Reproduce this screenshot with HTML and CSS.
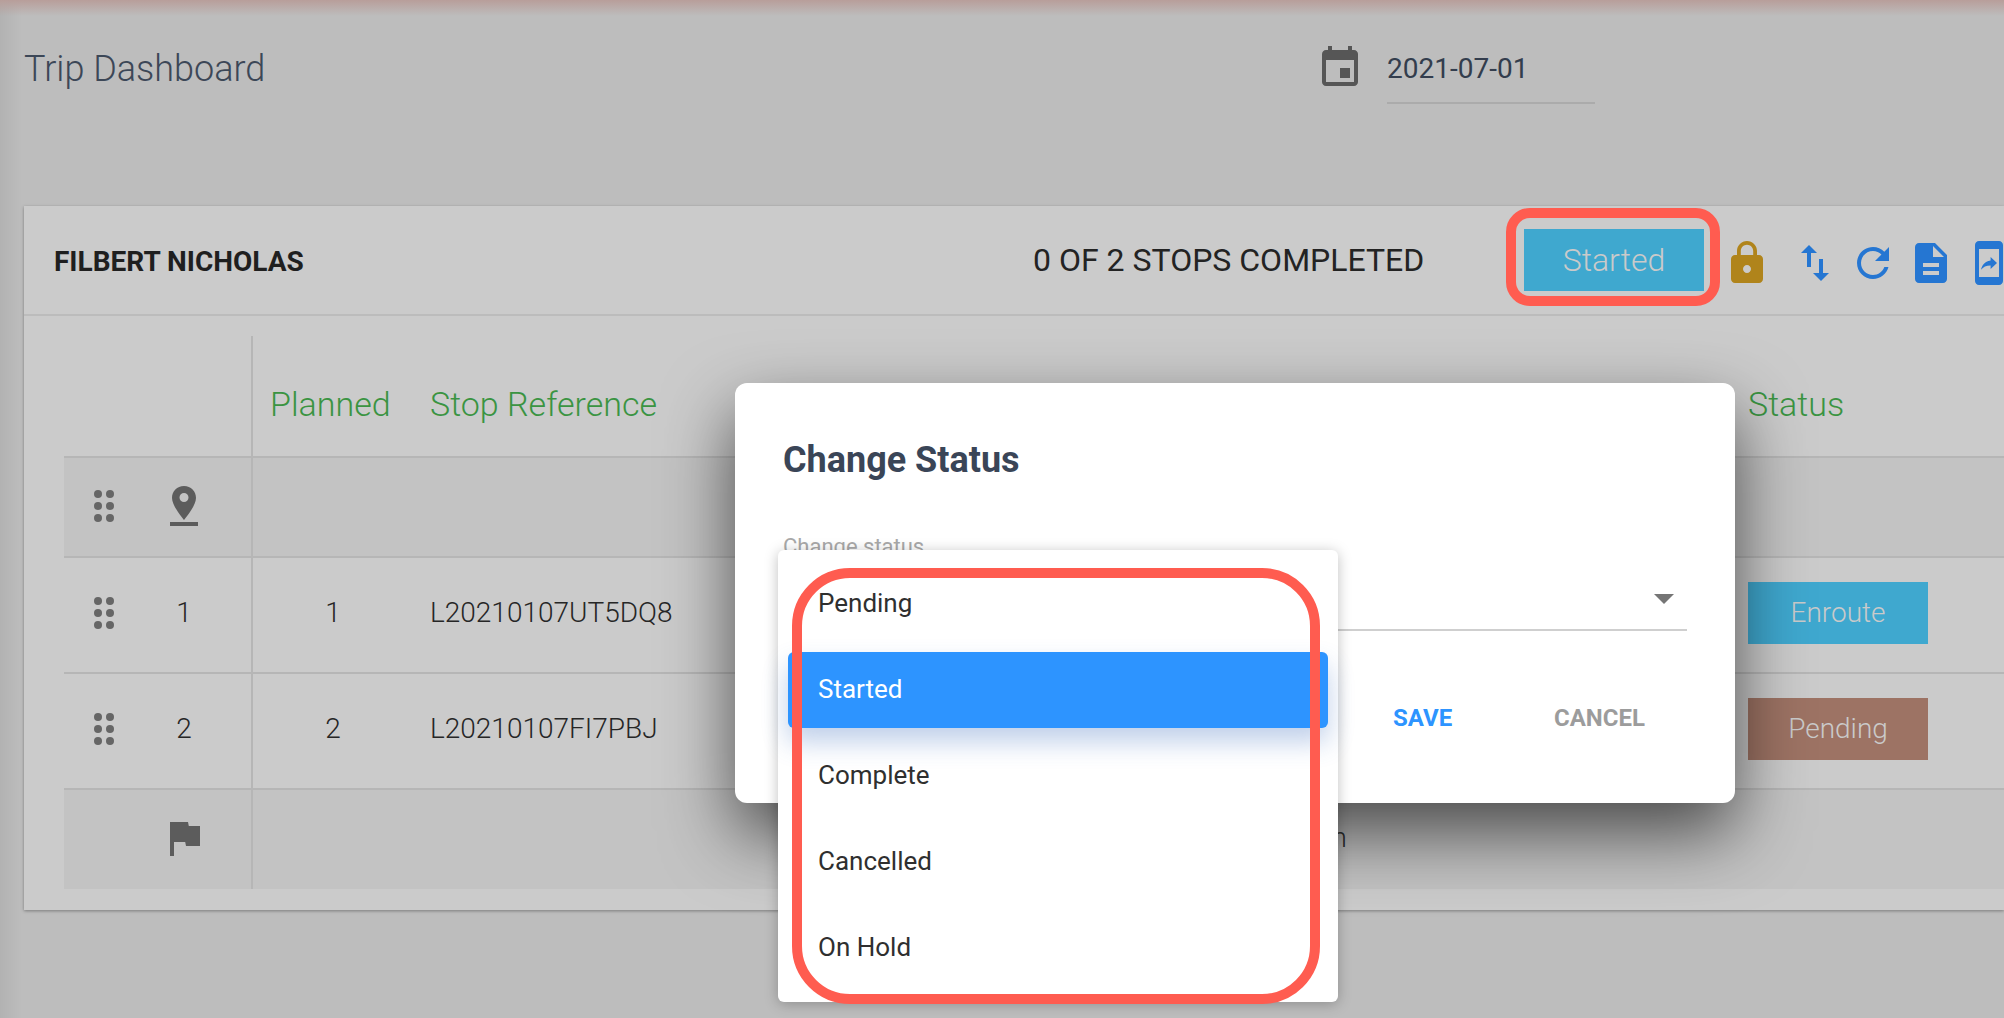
FILE: index.html
```html
<!DOCTYPE html>
<html lang="en">
<head>
<meta charset="utf-8">
<title>Trip Dashboard</title>
<link rel="stylesheet" href="styles.css">
</head>
<body>
<header class="page-head">
  <h1 class="page-title">Trip Dashboard</h1>
  <svg class="ico cal" viewBox="0 0 24 24"><path d="M17 12h-5v5h5v-5zM16 1v2H8V1H6v2H5c-1.11 0-1.99.9-1.99 2L3 19c0 1.1.89 2 2 2h14c1.1 0 2-.9 2-2V5c0-1.1-.9-2-2-2h-1V1h-2zm3 18H5V8h14v11z"/></svg>
  <div class="date-field">2021-07-01</div>
</header>

<section class="card">
  <div class="card-head">
    <div class="driver">FILBERT NICHOLAS</div>
    <div class="stops">0 OF 2 STOPS COMPLETED</div>
    <div class="status-wrap">
      <div class="badge badge-main">Started</div>
      <div class="mark mark-btn"></div>
    </div>
    <div class="tools">
      <svg class="ico lock" viewBox="0 0 24 24"><path d="M18 8h-1V6c0-2.76-2.24-5-5-5S7 3.24 7 6v2H6c-1.1 0-2 .9-2 2v10c0 1.1.9 2 2 2h12c1.1 0 2-.9 2-2V10c0-1.1-.9-2-2-2zm-6 9c-1.1 0-2-.9-2-2s.9-2 2-2 2 .9 2 2-.9 2-2 2zm3.1-9H8.9V6c0-1.71 1.39-3.1 3.1-3.1 1.71 0 3.1 1.39 3.1 3.1v2z"/></svg>
      <svg class="ico tool swap" viewBox="0 0 24 24"><path d="M16 17.01V10h-2v7.01h-3L15 21l4-3.99h-3zM9 3L5 6.99h3V14h2V6.99h3L9 3z"/></svg>
      <svg class="ico tool" viewBox="0 0 24 24"><path d="M17.65 6.35C16.2 4.9 14.21 4 12 4c-4.42 0-7.99 3.58-7.99 8s3.57 8 7.99 8c3.73 0 6.84-2.55 7.73-6h-2.08c-.82 2.33-3.04 4-5.65 4-3.31 0-6-2.69-6-6s2.69-6 6-6c1.66 0 3.14.69 4.22 1.78L13 11h7V4l-2.35 2.35z"/></svg>
      <svg class="ico tool" viewBox="0 0 24 24"><path d="M14 2H6c-1.1 0-1.99.9-1.99 2L4 20c0 1.1.89 2 1.99 2H18c1.1 0 2-.9 2-2V8l-6-6zm2 16H8v-2h8v2zm0-4H8v-2h8v2zm-3-5V3.5L18.5 9H13z"/></svg>
      <svg class="ico tool" viewBox="0 0 24 24"><path d="M17 1.01L7 1c-1.1 0-2 .9-2 2v18c0 1.1.9 2 2 2h10c1.1 0 2-.9 2-2V3c0-1.1-.9-1.99-2-1.99zM17 19H7V5h10v14zm-4.2-5.76v1.75L16 12l-3.2-2.98v1.7c-3.11.43-4.35 2.56-4.8 4.7 1.11-1.5 2.58-2.18 4.8-2.18z"/></svg>
    </div>
  </div>

  <div class="table">
    <div class="row row-head">
      <div class="cell cell-lead"></div>
      <div class="cell">Planned</div>
      <div class="cell">Stop Reference</div>
      <div class="cell">Status</div>
    </div>
    <div class="row row-shade row-start">
      <div class="cell cell-lead">
        <svg class="dots" viewBox="0 0 20 32"><g><circle cx="4" cy="4" r="4"/><circle cx="16" cy="4" r="4"/><circle cx="4" cy="16" r="4"/><circle cx="16" cy="16" r="4"/><circle cx="4" cy="28" r="4"/><circle cx="16" cy="28" r="4"/></g></svg>
        <div class="seq"><svg class="pin" viewBox="0 0 28 40"><path d="M14 0C7 0 2 5.300 2 12c0 8 12 22 12 22s12-14 12-22C26 5.300 21 0 14 0zm0 16a4.500 4.500 0 1 1 0-9 4.500 4.500 0 0 1 0 9z"/><rect x="0" y="36" width="28" height="4"/></svg></div>
      </div>
      <div class="cell"></div><div class="cell"></div><div class="cell"></div>
    </div>
    <div class="row row-stop">
      <div class="cell cell-lead">
        <svg class="dots" viewBox="0 0 20 32"><g><circle cx="4" cy="4" r="4"/><circle cx="16" cy="4" r="4"/><circle cx="4" cy="16" r="4"/><circle cx="16" cy="16" r="4"/><circle cx="4" cy="28" r="4"/><circle cx="16" cy="28" r="4"/></g></svg>
        <div class="seq">1</div>
      </div>
      <div class="cell"><span class="plan">1</span></div>
      <div class="cell">L20210107UT5DQ8</div>
      <div class="cell"><div class="badge badge-blue">Enroute</div></div>
    </div>
    <div class="row row-stop">
      <div class="cell cell-lead">
        <svg class="dots" viewBox="0 0 20 32"><g><circle cx="4" cy="4" r="4"/><circle cx="16" cy="4" r="4"/><circle cx="4" cy="16" r="4"/><circle cx="16" cy="16" r="4"/><circle cx="4" cy="28" r="4"/><circle cx="16" cy="28" r="4"/></g></svg>
        <div class="seq">2</div>
      </div>
      <div class="cell"><span class="plan">2</span></div>
      <div class="cell">L20210107FI7PBJ</div>
      <div class="cell"><div class="badge badge-brown">Pending</div></div>
    </div>
    <div class="row row-shade row-end">
      <div class="cell cell-lead">
        <div class="spacer"></div>
        <div class="seq"><svg class="flag" viewBox="0 0 24 24"><path d="M14.400 6L14 4H5v17h2v-7h5.600l.4 2h7V6z"/></svg></div>
      </div>
      <div class="cell"></div>
      <div class="cell cell-tail">n</div>
      <div class="cell"></div>
    </div>
  </div>
</section>

<div class="dialog">
  <h2 class="dialog-title">Change Status</h2>
  <div class="field">
    <div class="field-label">Change status</div>
    <div class="caret"></div>
  </div>
  <div class="actions">
    <span class="act act-save">SAVE</span>
    <span class="act act-cancel">CANCEL</span>
  </div>
</div>

<ul class="menu">
  <li class="item">Pending</li>
  <li class="item item-on">Started</li>
  <li class="item">Complete</li>
  <li class="item">Cancelled</li>
  <li class="item">On Hold</li>
</ul>
<div class="mark mark-menu"></div>
</body>
</html>
```

FILE: styles.css
```css
* { box-sizing: border-box; }
html, body { height: 100%; }
body {
  margin: 0;
  height: 1018px;
  overflow: hidden;
  position: relative;
  font-family: Roboto, "Liberation Sans", sans-serif;
  color: #262626;
  background:
    linear-gradient(to bottom, #b89e9a 0, rgba(189,189,189,0) 16px),
    linear-gradient(to right, #b2b2b2 0, #bdbdbd 22px);
}
.ico { display: block; width: 48px; height: 48px; flex: none; }

.page-head {
  display: flex;
  align-items: flex-start;
  height: 206px;
  padding: 44px 0 0 24px;
}
.page-title {
  width: 1292px;
  margin: 1px 0 0;
  font-size: 36px;
  line-height: 48px;
  font-weight: 300;
  color: #3c4757;
}
.cal { fill: #565656; }
.date-field {
  width: 208px;
  height: 60px;
  margin-left: 23px;
  padding-top: 1px;
  font-size: 28px;
  line-height: 48px;
  color: #333d4d;
  border-bottom: 2px solid #ababab;
}

.card {
  width: 1980px;
  height: 704px;
  margin-left: 24px;
  background: #cbcbcb;
  box-shadow: 0 1px 3px rgba(0,0,0,.35);
}
.card-head {
  display: flex;
  align-items: center;
  height: 110px;
  padding-left: 30px;
  border-bottom: 2px solid #bcbcbc;
}
.driver { flex: none; width: 979px; padding-top: 2px; font-size: 28px; font-weight: 700; color: #1f1f1f; }
.stops { flex: none; width: 491px; font-size: 32px; font-weight: 400; color: #232323; }
.status-wrap { position: relative; flex: none; }
.badge {
  width: 180px;
  height: 62px;
  display: flex;
  align-items: center;
  justify-content: center;
  color: #cacaca;
  font-size: 28px;
  font-weight: 300;
}
.badge-main { background: #3fa8cf; font-size: 32px; }
.badge-blue { background: #3fa8cf; }
.badge-brown { background: #9d7364; }
.mark { position: absolute; border: 10px solid #ff5c50; pointer-events: none; }
.mark-btn { left: -18px; top: -21px; width: 214px; height: 98px; border-radius: 24px; }
.mark-menu { left: 792px; top: 568px; width: 528px; height: 436px; border-radius: 58px; }

.tools { display: flex; flex: none; gap: 10px; margin: 6px 0 0 19px; }
.lock { fill: #b0841b; }
.tool { fill: #2576d2; }
.swap { margin-left: 10px; }

.table { margin: 20px 0 0 40px; }
.row {
  display: grid;
  grid-template-columns: 187px 179px 1318px 1fr;
  border-bottom: 2px solid #b6b6b6;
  font-size: 28px;
  font-weight: 300;
}
.cell { display: flex; align-items: center; }
.row > .cell:nth-child(2) { border-left: 2px solid #b6b6b6; padding-left: 17px; }
.row-head { height: 122px; font-size: 34px; color: #3a9442; }
.row-head .cell { align-items: flex-end; padding-bottom: 32px; }
.row-shade { background: #c3c3c3; }
.row-start { height: 100px; }
.row-start .cell { padding-bottom: 2px; }
.row-stop { height: 116px; }
.row-stop .cell { padding-bottom: 5px; }
.row-end { height: 99px; border-bottom: 0; }
.row-end .cell { padding-bottom: 3px; }
.cell-lead { padding-left: 30px; }
.dots { width: 20px; height: 32px; fill: #666; flex: none; }
.spacer { width: 20px; flex: none; }
.seq {
  width: 60px;
  margin-left: 40px;
  display: flex;
  justify-content: center;
}
.pin { width: 28px; height: 40px; fill: #5c5c5c; display: block; }
.flag { width: 48px; height: 48px; fill: #5c5c5c; display: block; flex: none; }
.plan { width: 126px; text-align: center; }
.row-end .cell-tail { justify-content: flex-end; padding-right: 401px; padding-bottom: 4px; color: #333; }

.dialog {
  position: absolute;
  left: 735px;
  top: 383px;
  width: 1000px;
  height: 420px;
  padding: 55px 48px 0;
  background: #fff;
  border-radius: 12px;
  box-shadow: 0 30px 70px rgba(0,0,0,.62);
}
.dialog-title {
  margin: 0;
  font-size: 36px;
  line-height: 44px;
  font-weight: 700;
  color: #3a4557;
}
.field {
  position: relative;
  width: 904px;
  height: 110px;
  margin-top: 39px;
  padding-top: 12px;
  border-bottom: 2px solid #cfcfcf;
}
.field-label { font-size: 22px; line-height: 28px; color: #a9a9a9; }
.caret {
  position: absolute;
  right: 13px;
  bottom: 25px;
  width: 0;
  height: 0;
  border-left: 10px solid transparent;
  border-right: 10px solid transparent;
  border-top: 10px solid #757575;
}
.actions { display: flex; margin: 72px 0 0 610px; }
.act { font-size: 24px; line-height: 30px; font-weight: 700; }
.act-save { width: 161px; color: #2d94ff; }
.act-cancel { color: #9c9c9c; }

.menu {
  position: absolute;
  left: 778px;
  top: 550px;
  width: 560px;
  height: 452px;
  margin: 0;
  padding: 16px 10px 0;
  list-style: none;
  background: #fff;
  border-radius: 6px;
  box-shadow: 0 2px 14px rgba(0,0,0,.25);
}
.item {
  display: flex;
  align-items: center;
  height: 76px;
  margin-bottom: 10px;
  padding: 0 0 2px 30px;
  font-size: 26px;
  color: #2f2f2f;
}
.item-on {
  background: #2d94ff;
  color: #fff;
  border-radius: 6px;
  box-shadow: 0 14px 26px rgba(60,110,190,.32);
}
```
